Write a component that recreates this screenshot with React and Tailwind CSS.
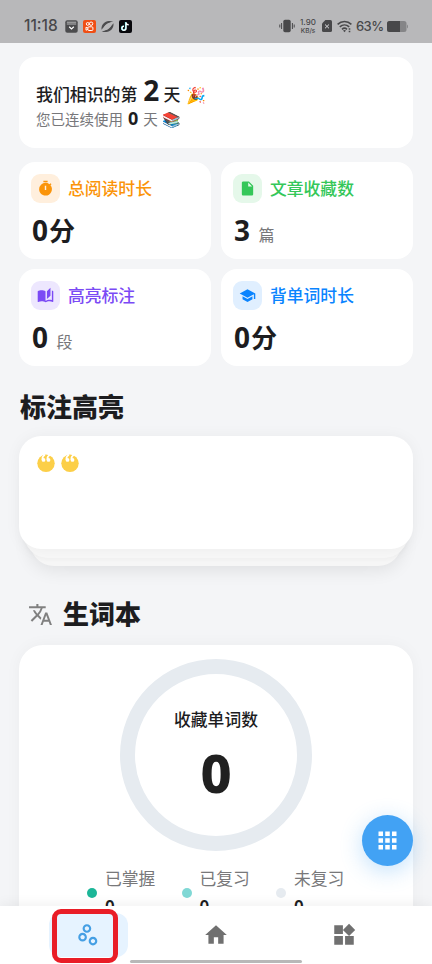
import React from 'react';
import {
  MdTimer,
  MdInsertDriveFile,
  MdAutoStories,
  MdSchool,
  MdTranslate,
  MdHome,
  MdWidgets,
  MdApps,
  MdOutlineScatterPlot,
} from 'react-icons/md';

const stats = [
  { label: '总阅读时长', value: '0', suffix: '分', icon: MdTimer, color: 'text-[#fb9409]', bg: 'bg-[#ffefdd]' },
  { label: '文章收藏数', value: '3', unit: '篇', icon: MdInsertDriveFile, color: 'text-[#34c759]', bg: 'bg-[#e5f8ea]' },
  { label: '高亮标注', value: '0', unit: '段', icon: MdAutoStories, color: 'text-[#7b4af5]', bg: 'bg-[#ede7fe]' },
  { label: '背单词时长', value: '0', suffix: '分', icon: MdSchool, color: 'text-[#0a84ff]', bg: 'bg-[#e0efff]' },
];

const legend = [
  { label: '已掌握', value: 0, dot: 'bg-[#1cb698]' },
  { label: '已复习', value: 0, dot: 'bg-[#80d8d5]' },
  { label: '未复习', value: 0, dot: 'bg-[#e6ebf0]' },
];

const StatusBar = () => (
  <header className="flex h-[43px] shrink-0 items-center bg-[#b8b8ba] pt-[9px] pr-[24px] pl-[24px] font-['Inter',sans-serif] text-[#48484a]">
    <span className="w-[36px] text-[15.5px] leading-none font-medium">11:18</span>
    <div className="ml-[5px] flex items-center gap-[5px]">
      <svg width="13" height="13" viewBox="0 0 13 13">
        <rect x="0.3" y="0.3" width="12.4" height="12.4" rx="2" fill="#4c4c4e" />
        <path d="M1.8 2.2h9.4M1.8 4h9.4" stroke="#c5c5c7" strokeWidth="0.9" />
        <path d="M4.2 6.8l2.3 2.2 2.3-2.2" stroke="#fff" strokeWidth="1.2" fill="none" />
      </svg>
      <svg width="13" height="13" viewBox="0 0 13 13">
        <rect width="13" height="13" rx="2" fill="#f04e14" />
        <g stroke="#fff" strokeWidth="1" fill="none">
          <circle cx="4.7" cy="3.9" r="1.4" />
          <circle cx="8.1" cy="3.7" r="1.7" />
          <rect x="4.9" y="6.8" width="5" height="3.7" rx="1" />
          <path d="M4.9 8L3 7.2v3l1.9-.8" />
        </g>
      </svg>
      <svg width="13" height="13" viewBox="0 0 13 13" fill="#4c4c4e">
        <path d="M.6 9.8C-.2 5.6 3.2 1.2 7.8 1c1.6-.1 3.2.1 4.6.5C8.6 2 4.2 4.6.6 9.8z" />
        <path d="M12.4 3.2c.8 4.2-2.6 8.6-7.2 8.8-1.6.1-3.2-.1-4.6-.5 3.8-.5 8.2-3.1 11.8-8.3z" />
        <ellipse cx="6.5" cy="6.5" rx="4" ry="2.5" transform="rotate(-42 6.5 6.5)" fill="#b8b8ba" />
      </svg>
      <svg width="13" height="13" viewBox="0 0 13 13" fill="none">
        <rect width="13" height="13" rx="2" fill="#08080c" />
        <path d="M7 2.3v6a2 2 0 1 1-2-2" stroke="#29dce0" strokeWidth="1.4" transform="translate(-.4 -.2)" />
        <path d="M7 2.3v6a2 2 0 1 1-2-2M7 2.5c.2 1.5 1.2 2.2 2.7 2.3" stroke="#fff" strokeWidth="1.4" />
      </svg>
    </div>
    <div className="ml-auto flex items-center">
      <svg width="16" height="14" viewBox="0 0 16 14">
        <rect x="4.3" y="0.8" width="7.4" height="12.4" rx="1.7" fill="#48484a" />
        <path d="M2.6 4v6M.8 5.5v3M13.4 4v6M15.2 5.5v3" stroke="#48484a" strokeWidth="1" />
      </svg>
      <div className="ml-[3px] flex w-[20px] flex-col items-center font-medium">
        <span className="text-[8px] leading-[10px] whitespace-nowrap">1.90</span>
        <span className="text-[6.5px] leading-[8px] whitespace-nowrap">KB/s</span>
      </div>
      <svg className="ml-[4px]" width="10" height="12" viewBox="0 0 10 12">
        <path d="M3.4 0H8.4A1.6 1.6 0 0 1 10 1.6v8.8A1.6 1.6 0 0 1 8.4 12H1.6A1.6 1.6 0 0 1 0 10.4V3.4z" fill="#48484a" />
        <path d="M3 4.5l4 3.8M7 4.5L3 8.3" stroke="#d8d8da" strokeWidth="1" />
      </svg>
      <svg className="ml-[5px]" width="15" height="13" viewBox="0 0 15 13" fill="none" stroke="#48484a" strokeWidth="1.6">
        <path d="M.6 4.4c4-3.8 9.8-3.8 13.8 0M2.8 6.9c2.8-2.6 6.600-2.6 9.4 0M5 9.3c1.5-1.4 3.5-1.4 5 0" />
        <path d="M6 10.6a2.2 2.2 0 0 1 3 0L7.5 12.2z" fill="#48484a" stroke="none" />
        <path d="M12.5 8.3v4" strokeDasharray="1.5 1" />
      </svg>
      <span className="ml-[4px] w-[27px] text-[13px] leading-none font-medium tracking-[-0.6px] whitespace-nowrap">63%</span>
      <svg className="ml-[4px]" width="21" height="11" viewBox="0 0 21 11">
        <rect width="19.5" height="11" rx="2.5" fill="#858587" />
        <path d="M2.5 0H13v11H2.5A2.5 2.5 0 0 1 0 8.5v-6A2.5 2.5 0 0 1 2.5 0z" fill="#48484a" />
        <path d="M20 3.5c1.3.8 1.3 3.2 0 4z" fill="#858587" />
      </svg>
    </div>
  </header>
);

const StatCard = ({ stat }) => {
  const Icon = stat.icon;
  return (
    <div className="h-[97px] rounded-[16px] bg-white px-[12px] pt-[12px]">
      <div className="flex items-center gap-[8px]">
        <div className={`flex size-[29px] items-center justify-center rounded-[9px] ${stat.bg} ${stat.color}`}>
          <Icon size={17} />
        </div>
        <span className={`pt-[1px] text-[16.8px] leading-none font-medium ${stat.color}`}>{stat.label}</span>
      </div>
      <div className="mt-[12px] ml-[1px] flex h-[30px] items-baseline leading-[30px] font-bold text-[#1d1d1f]">
        <span className="text-[28px]">{stat.value}</span>
        {stat.suffix && <span className="ml-[1px] text-[26px]">{stat.suffix}</span>}
        {stat.unit && <span className="ml-[8.5px] text-[16px] font-normal text-[#77777a]">{stat.unit}</span>}
      </div>
    </div>
  );
};

// Yellow disc with a pair of opening quote marks cut into the top edge
const QuoteBadge = () => (
  <svg width="18" height="19" viewBox="0 0 18 19">
    <circle cx="9" cy="9.3" r="8.7" fill="#fccf48" />
    <g fill="#fff">
      <circle cx="6.5" cy="5.9" r="1.9" />
      <path d="M4.6 5.9C4.3 2.9 5.4 1 7.8 0l.5 1.8C7 2.4 6.5 3.2 6.5 4.5z" />
      <circle cx="11.5" cy="5.9" r="1.9" />
      <path d="M9.6 5.9C9.3 2.9 10.4 1 12.8 0l.5 1.8C12 2.4 11.5 3.2 11.5 4.5z" />
    </g>
  </svg>
);

const HighlightStack = () => (
  <div className="relative mt-[14px] h-[130px] shrink-0">
    <div className="absolute inset-x-[11px] top-[20px] bottom-0 rounded-[24px] bg-[#f6f6f6] shadow-[0_4px_18px_rgba(0,0,0,0.09)]" />
    <div className="absolute inset-x-[5px] top-[10px] bottom-[8px] rounded-[24px] bg-[#f8f8f8] shadow-[0_1px_5px_rgba(0,0,0,0.03)]" />
    <div className="relative flex h-[113px] gap-[6px] rounded-[22px] bg-white px-[18px] pt-[18px] shadow-[0_1px_16px_rgba(0,0,0,0.05)]">
      <QuoteBadge />
      <QuoteBadge />
    </div>
  </div>
);

const WordBook = () => (
  <section className="mt-[16px] flex h-[320px] shrink-0 flex-col items-center rounded-[24px] bg-white pt-[14px] shadow-[0_0_16px_rgba(0,0,0,0.04)]">
    <div className="flex size-[192px] shrink-0 flex-col items-center rounded-full border-[15px] border-[#e6ebf0] pt-[37px]">
      <span className="text-[16.8px] leading-[17px] font-medium text-[#1d1d1f]">收藏单词数</span>
      <span className="mt-[18px] text-[54px] leading-[52px] font-extrabold text-[#202020]">0</span>
    </div>
    <div className="mt-[18px] flex w-[258px]">
      {legend.map((item) => (
        <div key={item.label} className="flex w-[94.5px] shrink-0 items-center gap-[8px]">
          <span className={`size-[10px] shrink-0 rounded-full ${item.dot}`} />
          <div className="flex flex-col">
            <span className="text-[16.8px] leading-[19px] whitespace-nowrap text-[#78787a]">{item.label}</span>
            <span className="mt-[9px] text-[17px] leading-[20px] font-semibold text-[#1d1d1f]">{item.value}</span>
          </div>
        </div>
      ))}
    </div>
  </section>
);

const BottomNav = () => (
  <nav className="absolute inset-x-0 bottom-0 h-[58px] bg-white shadow-[0_-2px_12px_rgba(0,0,0,0.06)]">
    <div className="flex h-full items-start justify-between pt-[7px] pr-[48px] pl-[49px]">
      <div className="flex h-[44px] w-[79px] items-center justify-center rounded-[12px] bg-[#e6f3ff] pr-[1px] text-[#459fe4]">
        <MdOutlineScatterPlot size={26} />
      </div>
      <div className="flex h-[44px] w-[79px] items-center justify-center pr-[1px] text-[#707070]">
        <MdHome size={26} />
      </div>
      <div className="flex h-[44px] w-[79px] items-center justify-center pr-[1px] text-[#707070]">
        <MdWidgets size={26} />
      </div>
    </div>
    <div className="absolute bottom-[1px] left-[130px] h-[3px] w-[172px] rounded-full bg-[#b8b8b8]" />
    <div className="absolute top-[3px] left-[52px] h-[54px] w-[66px] rounded-[9px] border-[5px] border-[#e91d27]" />
  </nav>
);

const App = () => {
  return (
    <div className="relative flex h-[964px] w-[432px] flex-col overflow-hidden bg-[#f4f5f7] font-['Noto_Sans','Noto_Sans_CJK_SC',sans-serif]">
      <StatusBar />
      <main className="flex min-h-0 flex-1 flex-col px-[19px] pt-[14px]">
        <section className="h-[91px] shrink-0 rounded-[16px] bg-white pt-[17px] pl-[17px]">
          <div className="flex h-[32px] items-baseline text-[16.9px] leading-[32px] font-medium whitespace-nowrap text-[#1d1d1f]">
            <span>我们相识的第</span>
            <span className="ml-[6px] text-[28px] font-bold">2</span>
            <span className="ml-[4px]">天</span>
            <span className="ml-[6px] text-[16px]">🎉</span>
          </div>
          <div className="mt-[2px] flex h-[20px] items-baseline text-[14.5px] leading-[20px] whitespace-nowrap text-[#77777a]">
            <span>您已连续使用</span>
            <span className="ml-[5px] text-[18px] font-bold text-[#1d1d1f]">0</span>
            <span className="ml-[5px]">天</span>
            <span className="ml-[4px] text-[15px]">📚</span>
          </div>
        </section>

        <section className="mt-[14px] grid shrink-0 grid-cols-2 gap-[10px]">
          {stats.map((stat) => (
            <StatCard key={stat.label} stat={stat} />
          ))}
        </section>

        <h2 className="mt-[26px] ml-[1px] h-[30px] shrink-0 text-[26px] leading-[30px] font-black text-[#1d1d1f]">标注高亮</h2>
        <HighlightStack />

        <div className="mt-[33px] flex h-[30px] shrink-0 items-center gap-[10px] pl-[9px]">
          <MdTranslate size={25} className="text-[#808080]" />
          <h2 className="text-[26px] leading-[30px] font-black text-[#1d1d1f]">生词本</h2>
        </div>
        <WordBook />
      </main>

      <button className="absolute top-[815px] left-[362px] flex size-[51px] items-center justify-center rounded-full bg-[#42a2f4] text-white shadow-[0_5px_22px_rgba(66,162,244,0.32)]">
        <MdApps size={27} />
      </button>
      <BottomNav />
    </div>
  );
};

export default App;
